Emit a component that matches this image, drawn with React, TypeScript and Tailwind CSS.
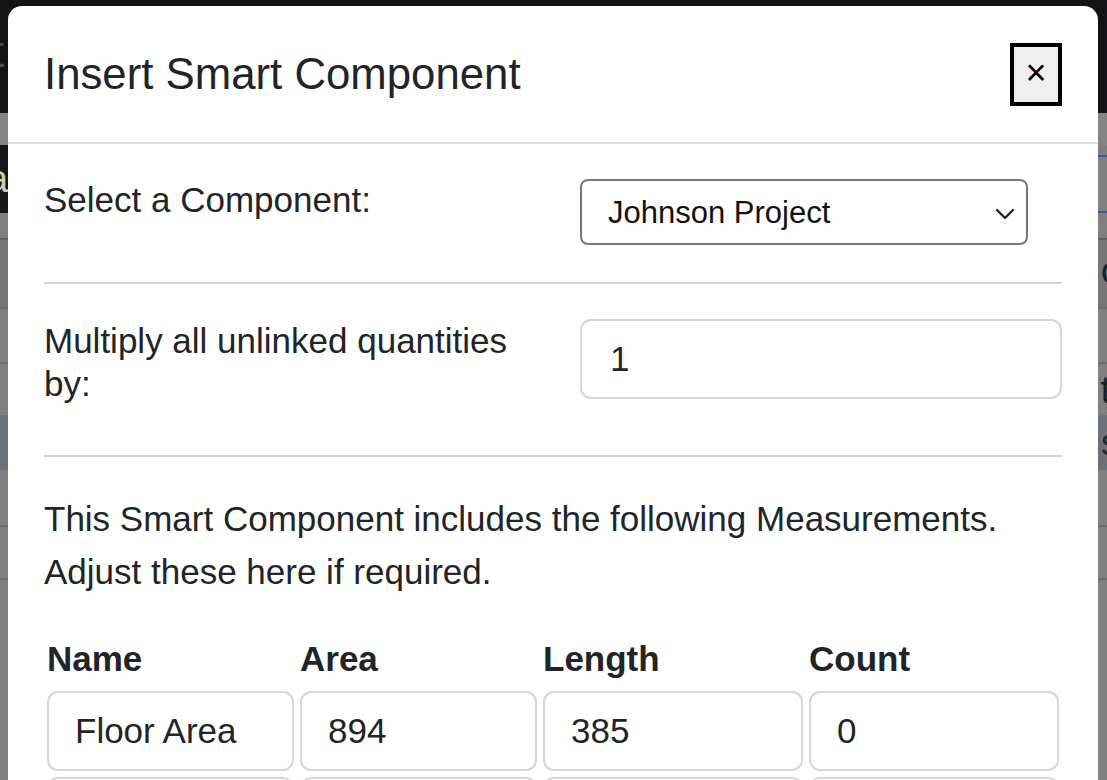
import React from "react";

const font = { fontFamily: '"Liberation Sans", Arial, sans-serif' };

function Field({ value, className }: { value: string; className?: string }) {
  return (
    <input
      readOnly
      value={value}
      className={
        "block h-[80px] rounded-[11px] border-2 border-[#d3d6da] bg-white pl-[26px] pr-[20px] text-[35px] leading-[52px] text-[#212529] outline-none " +
        (className ?? "")
      }
    />
  );
}

export default function App() {
  return (
    <div className="relative h-[780px] w-[1107px] overflow-hidden bg-[#7f7f7f]" style={font}>
      {/* page behind the overlay */}
      <div className="flex flex-col">
        <div className="flex h-[113px] items-center bg-[#121315]">
          <span className="-ml-[8px] -mt-[10px] text-[44px] leading-none text-[#4e4f51]">t</span>
        </div>
        <div className="h-[32px] bg-[#858585]" />
        <div className="flex h-[68px]">
          <div className="flex w-[560px] items-center bg-[#141517]">
            <span className="-ml-[13px] text-[38px] leading-none text-[#cfc9b2]">a</span>
          </div>
          <div className="flex-1 bg-[#7f7f7f] pt-[10px]">
            <div className="h-[58px] border-y-2 border-[#2f5f9e]" />
          </div>
        </div>
        <div className="h-[27px] border-b-2 border-[#626262] bg-[#7f7f7f]" />
        <div className="flex h-[67px] items-end justify-end bg-[#777777] pb-[18px]">
          <span className="-mr-[14px] text-[36px] leading-none text-[#1e1e1e]">o</span>
        </div>
        <div className="h-[55px] border-t-2 border-[#6e6e6e] bg-[#7f7f7f]" />
        <div className="flex h-[53px] items-center justify-end border-t-2 border-[#6e6e6e] bg-[#7f7f7f]">
          <span className="-mr-[4px] text-[38px] leading-none text-[#1e1e1e]">t</span>
        </div>
        <div className="flex h-[55px] items-center justify-end bg-[#6c7079]">
          <span className="-mr-[12px] text-[36px] leading-none text-[#262626]">s</span>
        </div>
        <div className="h-[55px] bg-[#7f7f7f]" />
        <div className="h-[53px] border-t-2 border-[#6e6e6e] bg-[#7f7f7f]" />
        <div className="h-[210px] border-t-2 border-[#6e6e6e] bg-[#7f7f7f]" />
      </div>

      {/* modal */}
      <div className="absolute left-[8px] top-[6px] w-[1090px] rounded-t-[14px] bg-white">
        {/* header */}
        <div className="flex items-start justify-between border-b-2 border-[#dee2e6] pb-[35px] pl-[36px] pr-[36px] pt-[35px]">
          <h5 className="text-[43.75px] font-normal leading-[66px] text-[#212529]">Insert Smart Component</h5>
          <button className="mt-[2px] flex h-[63px] w-[52px] items-center justify-center border-4 border-black bg-[#efefef] pb-[3px] text-[36px] leading-none text-black">
            ×
          </button>
        </div>

        {/* body */}
        <div className="px-[36px] pt-[35px]">
          <div className="flex">
            <label className="w-[536px] text-[35px] leading-[42px] text-[#212529]">Select a Component:</label>
            <div className="flex h-[66px] w-[448px] items-center justify-between rounded-[8px] border-2 border-[#767676] pl-[26px] pr-[11px] pt-[3px]">
              <span className="text-[31px] text-[#111]">Johnson Project</span>
              <svg width="20" height="12" viewBox="0 0 20 12" fill="none">
                <path d="M2 2 L10 10 L18 2" stroke="#222" strokeWidth="2.4" strokeLinecap="round" strokeLinejoin="round" />
              </svg>
            </div>
          </div>

          <div className="mt-[37px] h-[2px] bg-[#d2d2d2]" />

          <div className="mt-[35px] flex">
            <label className="mb-[15px] w-[536px] pr-[40px] text-[35px] leading-[43px] text-[#212529]">
              Multiply all unlinked quantities by:
            </label>
            <Field value="1" className="w-[482px] pl-[28px]" />
          </div>

          <div className="mt-[35px] h-[2px] bg-[#d2d2d2]" />

          <p className="mt-[35px] text-[35px] leading-[53px] text-[#212529]">
            This Smart Component includes the following Measurements. Adjust these here if required.
          </p>

          <div className="ml-[3px] mt-[40px] grid grid-cols-[247px_237px_260px_250px] gap-x-[6px] gap-y-[6px]">
            <div className="mb-[5px] text-[35px] font-bold leading-[42px] text-[#212529]">Name</div>
            <div className="mb-[5px] text-[35px] font-bold leading-[42px] text-[#212529]">Area</div>
            <div className="mb-[5px] text-[35px] font-bold leading-[42px] text-[#212529]">Length</div>
            <div className="mb-[5px] text-[35px] font-bold leading-[42px] text-[#212529]">Count</div>
            <Field value="Floor Area" className="w-full" />
            <Field value="894" className="w-full" />
            <Field value="385" className="w-full" />
            <Field value="0" className="w-full" />
            <Field value="" className="w-full" />
            <Field value="" className="w-full" />
            <Field value="" className="w-full" />
            <Field value="" className="w-full" />
          </div>
        </div>
      </div>
    </div>
  );
}
